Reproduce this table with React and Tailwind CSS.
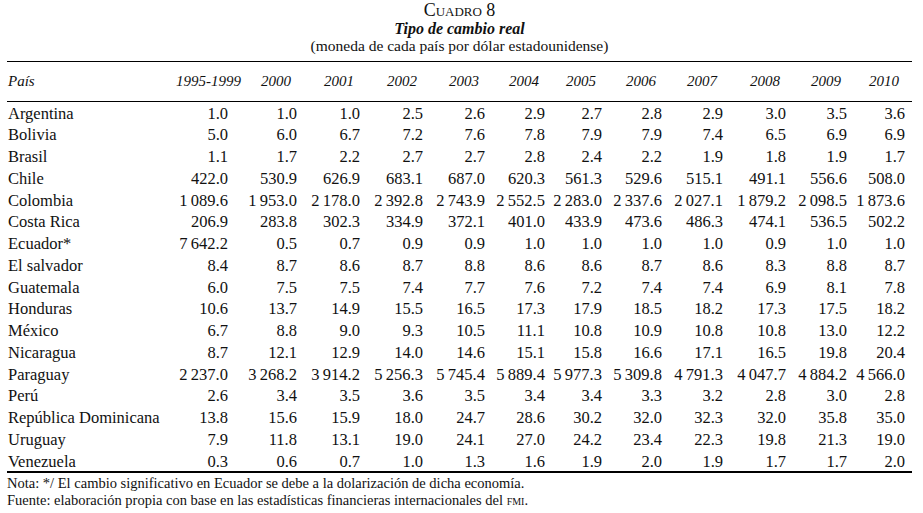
const years = ['1995-1999', '2000', '2001', '2002', '2003', '2004', '2005', '2006', '2007', '2008', '2009', '2010']

const t = '\u2009'

const rows = [
  ['Argentina', '1.0', '1.0', '1.0', '2.5', '2.6', '2.9', '2.7', '2.8', '2.9', '3.0', '3.5', '3.6'],
  ['Bolivia', '5.0', '6.0', '6.7', '7.2', '7.6', '7.8', '7.9', '7.9', '7.4', '6.5', '6.9', '6.9'],
  ['Brasil', '1.1', '1.7', '2.2', '2.7', '2.7', '2.8', '2.4', '2.2', '1.9', '1.8', '1.9', '1.7'],
  ['Chile', '422.0', '530.9', '626.9', '683.1', '687.0', '620.3', '561.3', '529.6', '515.1', '491.1', '556.6', '508.0'],
  ['Colombia', `1${t}089.6`, `1${t}953.0`, `2${t}178.0`, `2${t}392.8`, `2${t}743.9`, `2${t}552.5`, `2${t}283.0`, `2${t}337.6`, `2${t}027.1`, `1${t}879.2`, `2${t}098.5`, `1${t}873.6`],
  ['Costa Rica', '206.9', '283.8', '302.3', '334.9', '372.1', '401.0', '433.9', '473.6', '486.3', '474.1', '536.5', '502.2'],
  ['Ecuador*', `7${t}642.2`, '0.5', '0.7', '0.9', '0.9', '1.0', '1.0', '1.0', '1.0', '0.9', '1.0', '1.0'],
  ['El salvador', '8.4', '8.7', '8.6', '8.7', '8.8', '8.6', '8.6', '8.7', '8.6', '8.3', '8.8', '8.7'],
  ['Guatemala', '6.0', '7.5', '7.5', '7.4', '7.7', '7.6', '7.2', '7.4', '7.4', '6.9', '8.1', '7.8'],
  ['Honduras', '10.6', '13.7', '14.9', '15.5', '16.5', '17.3', '17.9', '18.5', '18.2', '17.3', '17.5', '18.2'],
  ['México', '6.7', '8.8', '9.0', '9.3', '10.5', '11.1', '10.8', '10.9', '10.8', '10.8', '13.0', '12.2'],
  ['Nicaragua', '8.7', '12.1', '12.9', '14.0', '14.6', '15.1', '15.8', '16.6', '17.1', '16.5', '19.8', '20.4'],
  ['Paraguay', `2${t}237.0`, `3${t}268.2`, `3${t}914.2`, `5${t}256.3`, `5${t}745.4`, `5${t}889.4`, `5${t}977.3`, `5${t}309.8`, `4${t}791.3`, `4${t}047.7`, `4${t}884.2`, `4${t}566.0`],
  ['Perú', '2.6', '3.4', '3.5', '3.6', '3.5', '3.4', '3.4', '3.3', '3.2', '2.8', '3.0', '2.8'],
  ['República Dominicana', '13.8', '15.6', '15.9', '18.0', '24.7', '28.6', '30.2', '32.0', '32.3', '32.0', '35.8', '35.0'],
  ['Uruguay', '7.9', '11.8', '13.1', '19.0', '24.1', '27.0', '24.2', '23.4', '22.3', '19.8', '21.3', '19.0'],
  ['Venezuela', '0.3', '0.6', '0.7', '1.0', '1.3', '1.6', '1.9', '2.0', '1.9', '1.7', '1.7', '2.0'],
]

const grid =
  'grid grid-cols-[169px_52px_69px_63px_63px_62px_60px_57px_60px_61px_63px_61px_58px] pr-[7px]'

export default function App() {
  return (
    <div
      className="w-[923px] h-[513px] bg-white text-[#111] overflow-hidden"
      style={{ fontFamily: '"Liberation Serif", "Times New Roman", serif' }}
    >
      <div className="ml-[7px] w-[905px]">
        {/* title */}
        <div className="flex flex-col items-center pt-[2px] leading-[17.5px]">
          <div className="text-[18px] [font-variant:small-caps]">Cuadro 8</div>
          <div className="text-[16px] font-bold italic">Tipo de cambio real</div>
          <div className="text-[15.5px]">(moneda de cada país por dólar estadounidense)</div>
        </div>

        {/* table */}
        <div className="mt-[6px] border-t border-black">
          <div className={`${grid} h-[40px] items-center italic text-[15px] border-b border-black`}>
            <div className="pl-[1px]">País</div>
            {years.map((y) => (
              <div key={y} className="text-right pr-[6px] whitespace-nowrap">
                {y}
              </div>
            ))}
          </div>

          {rows.map((r) => (
            <div key={r[0]} className={`${grid} h-[21.75px] items-center text-[16.5px]`}>
              <div className="pl-[1px] whitespace-nowrap">{r[0]}</div>
              {r.slice(1).map((v, i) => (
                <div key={i} className="text-right whitespace-nowrap">
                  {v}
                </div>
              ))}
            </div>
          ))}

          <div className="border-t-2 border-black" />
        </div>

        {/* notes */}
        <div className="pt-[2px] text-[14.5px] leading-[17px]">
          <div>Nota: */ El cambio significativo en Ecuador se debe a la dolarización de dicha economía.</div>
          <div>
            Fuente: elaboración propia con base en las estadísticas financieras internacionales del{' '}
            <span className="[font-variant:small-caps]">fmi</span>.
          </div>
        </div>
      </div>
    </div>
  )
}
